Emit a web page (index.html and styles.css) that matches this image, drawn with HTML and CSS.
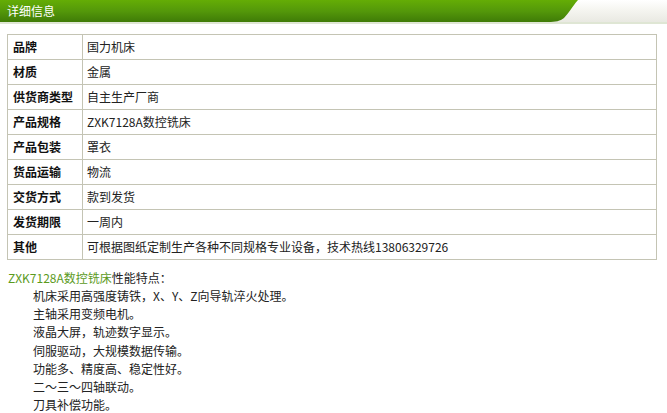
FILE: index.html
```html
<!DOCTYPE html>
<html lang="zh">
<head>
<meta charset="utf-8">
<title>详细信息</title>
<link rel="stylesheet" href="styles.css">
</head>
<body>
<div class="header">
  <div class="tab">详细信息</div>
</div>
<table class="spec">
  <tr><th>品牌</th><td>国力机床</td></tr>
  <tr><th>材质</th><td>金属</td></tr>
  <tr><th>供货商类型</th><td>自主生产厂商</td></tr>
  <tr><th>产品规格</th><td>ZXK7128A数控铣床</td></tr>
  <tr><th>产品包装</th><td>罩衣</td></tr>
  <tr><th>货品运输</th><td>物流</td></tr>
  <tr><th>交货方式</th><td>款到发货</td></tr>
  <tr><th>发货期限</th><td>一周内</td></tr>
  <tr><th>其他</th><td>可根据图纸定制生产各种不同规格专业设备，技术热线13806329726</td></tr>
</table>
<div class="desc">
  <p class="lead"><span class="hl">ZXK7128A数控铣床</span>性能特点：</p>
  <ul>
    <li>机床采用高强度铸铁，X、Y、Z向导轨淬火处理。</li>
    <li>主轴采用变频电机。</li>
    <li>液晶大屏，轨迹数字显示。</li>
    <li>伺服驱动，大规模数据传输。</li>
    <li>功能多、精度高、稳定性好。</li>
    <li>二～三～四轴联动。</li>
    <li>刀具补偿功能。</li>
  </ul>
</div>
</body>
</html>
```
FILE: styles.css
```css
html, body {
  margin: 0;
  padding: 0;
  background: #ffffff;
  font-family: "Noto Sans CJK SC", "DejaVu Sans", sans-serif;
  font-size: 12px;
  color: #222;
}
.header {
  height: 22px;
  border-bottom: 2px solid #dfe6d4;
  background: linear-gradient(to bottom, #ffffff 0%, #f4f4ef 50%, #e9e9e2 100%);
  display: flex;
}
.tab {
  width: 578px;
  height: 22px;
  line-height: 22px;
  padding-left: 7px;
  box-sizing: border-box;
  color: #ffffff;
  font-size: 12px;
  background: linear-gradient(to bottom, #64ad05 0%, #54980a 50%, #3f7b07 100%);
  clip-path: path("M0 0 H578 C572 7 568 14 564 18 C560 21 556 22 548 22 H0 Z");
}
.spec {
  margin: 10px 0 0 7px;
  width: 650px;
  border-collapse: collapse;
  border: 1px solid #c4c4b4;
}
.spec th, .spec td {
  border: 1px solid #c4c4b4;
  height: 24px;
  padding: 0 0 0 4px;
  text-align: left;
  vertical-align: middle;
  font-size: 12px;
  line-height: 14px;
}
.spec th {
  width: 69px;
  font-weight: bold;
  color: #111;
  padding-left: 5px;
}
.spec td {
  color: #222;
}
.desc {
  margin-top: 9px;
  padding-left: 8px;
}
.desc p {
  margin: 0;
  line-height: 18px;
}
.hl {
  color: #5b9a1c;
}
.desc ul {
  margin: 0;
  padding-left: 25px;
  list-style: none;
}
.desc li {
  line-height: 18.2px;
  color: #222;
}
```
